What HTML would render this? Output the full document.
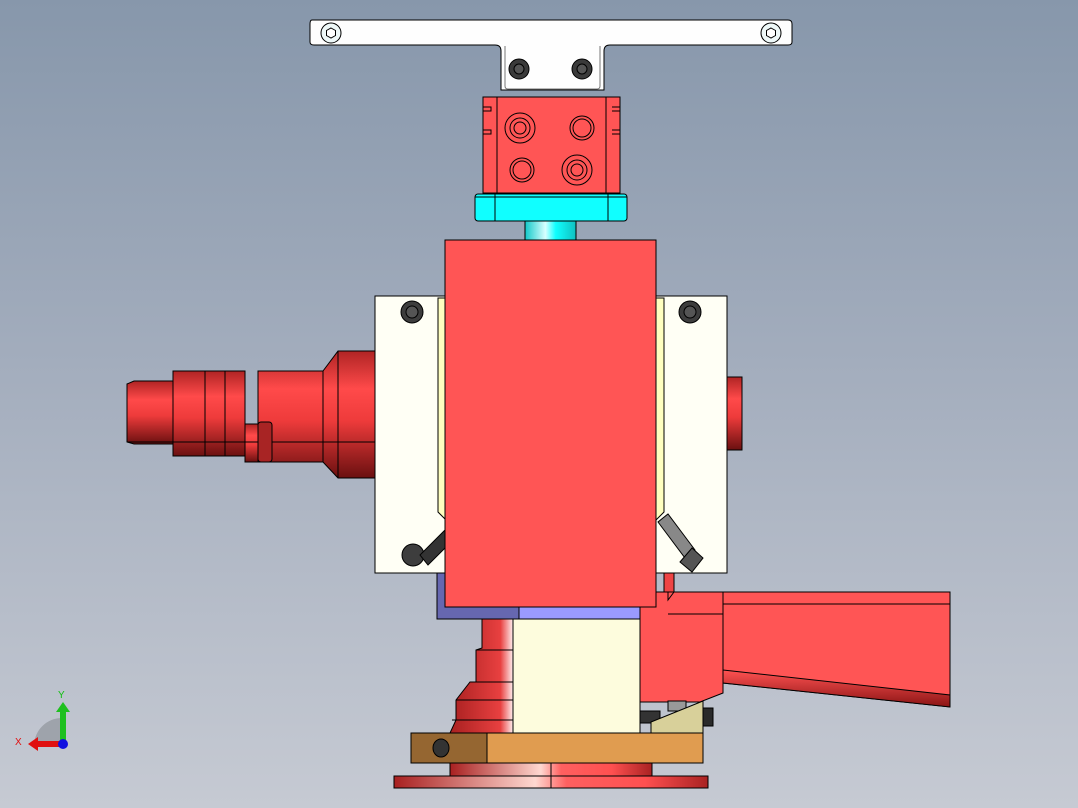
<!DOCTYPE html>
<html><head><meta charset="utf-8"><style>
html,body{margin:0;padding:0;width:1078px;height:808px;overflow:hidden}
body{background:linear-gradient(#8797ab,#a3adbd 45%,#c6cad3)}
svg{position:absolute;left:0;top:0}
</style></head><body>
<svg width="1078" height="808" viewBox="0 0 1078 808" xmlns="http://www.w3.org/2000/svg" font-family="Liberation Sans, sans-serif">
<defs>
<linearGradient id="cylV" x1="0" y1="0" x2="0" y2="1">
<stop offset="0" stop-color="#b02424"/><stop offset=".3" stop-color="#ff4a4a"/><stop offset=".55" stop-color="#ee3b3b"/><stop offset="1" stop-color="#6a1010"/></linearGradient>
<linearGradient id="cylH" x1="0" y1="0" x2="1" y2="0">
<stop offset="0" stop-color="#a82020"/><stop offset=".45" stop-color="#ffd8d0"/><stop offset=".55" stop-color="#ff6060"/><stop offset=".8" stop-color="#ff5050"/><stop offset="1" stop-color="#a82222"/></linearGradient>
<linearGradient id="cylH2" x1="0" y1="0" x2="1" y2="0">
<stop offset="0" stop-color="#a82020"/><stop offset=".8" stop-color="#e84040"/><stop offset="1" stop-color="#ffeeee"/></linearGradient>
<linearGradient id="cyan" x1="0" y1="0" x2="1" y2="0">
<stop offset="0" stop-color="#10c8c8"/><stop offset=".4" stop-color="#d8ffff"/><stop offset=".6" stop-color="#10ffff"/><stop offset="1" stop-color="#10c0c0"/></linearGradient>
<linearGradient id="hb" x1="0" y1="0" x2="0" y2="1"><stop offset="0" stop-color="#ff5252"/><stop offset="1" stop-color="#8a1414"/></linearGradient>
</defs>
<g stroke="#000" stroke-width="1">
<!-- top bar -->
<path d="M312 20 H788 Q792 20 792 24 V42 Q792 45 788 45 H610 Q604 45 604 51 V90 H501 V51 Q501 45 495 45 H314 Q310 45 310 42 V24 Q310 20 312 20Z" fill="#fefefe"/>
<path d="M505 46 V86 Q505 89 508 89 H597 Q600 89 600 86 V46" fill="none" stroke="#777"/>
<circle cx="331" cy="33" r="10" fill="#eef8f8"/><polygon points="331,28 335.5,30.5 335.5,35.5 331,38 326.5,35.5 326.5,30.5" fill="#fff"/>
<circle cx="771" cy="33" r="10" fill="#eef8f8"/><polygon points="771,28 775.5,30.5 775.5,35.5 771,38 766.5,35.5 766.5,30.5" fill="#fff"/>
<circle cx="519" cy="69" r="10" fill="#3a3a3a"/><circle cx="519" cy="69" r="5" fill="#555"/>
<circle cx="582" cy="69" r="10" fill="#3a3a3a"/><circle cx="582" cy="69" r="5" fill="#555"/>
<!-- red head block -->
<rect x="483" y="97" width="137" height="96" fill="#ff5555"/>
<rect x="497" y="97" width="109" height="96" fill="#ff5555"/>
<path d="M483 107 h8 v4 h-8 M483 130 h8 v4 h-8 M612 107 h8 v4 h-8 M612 130 h8 v4 h-8" fill="none"/>
<circle cx="520" cy="128" r="15" fill="none"/><circle cx="520" cy="128" r="10" fill="none"/><circle cx="520" cy="128" r="6" fill="none"/>
<circle cx="582" cy="128" r="12" fill="none"/><circle cx="582" cy="128" r="9" fill="none"/>
<circle cx="522" cy="170" r="12" fill="none"/><circle cx="522" cy="170" r="9" fill="none"/>
<circle cx="577" cy="170" r="15" fill="none"/><circle cx="577" cy="170" r="10" fill="none"/><circle cx="577" cy="170" r="6" fill="none"/>
<!-- cyan -->
<rect x="475" y="194" width="152" height="27" rx="3" fill="#10ffff"/>
<path d="M495 194 V221 M608 194 V221 M475 197 H627" fill="none"/>
<rect x="525" y="221" width="51" height="20" fill="url(#cyan)"/>
<!-- left cylinder -->
<path d="M127 384 L134 381 H173 V444 H134 L127 442Z" fill="url(#cylV)"/>
<rect x="173" y="371" width="72" height="85" fill="url(#cylV)"/>
<path d="M205 371 V456 M225 371 V456" fill="none"/>
<rect x="245" y="424" width="15" height="38" fill="url(#cylV)"/>
<path d="M258 371 H323 L338 351 H375 V478 H338 L323 462 H258Z" fill="url(#cylV)"/>
<path d="M323 371 V462 M338 351 V478 M127 442 H375" fill="none"/>
<rect x="258" y="422" width="14" height="40" rx="3" fill="#a82424"/>
<rect x="727" y="377" width="15" height="73" fill="url(#cylV)"/>
<!-- white plates -->
<rect x="375" y="296" width="70" height="277" fill="#fffff5"/>
<rect x="656" y="296" width="71" height="277" fill="#fffff5"/>
<path d="M438 298 V512 L446 520 V298Z" fill="#ffffc0"/>
<path d="M664 298 V512 L656 520 V298Z" fill="#ffffc0"/>
<circle cx="412" cy="312" r="11" fill="#3d3d3d"/><circle cx="412" cy="312" r="6" fill="#555"/>
<circle cx="690" cy="312" r="11" fill="#3d3d3d"/><circle cx="690" cy="312" r="6" fill="#555"/>
<circle cx="413" cy="555" r="11" fill="#3d3d3d"/>
<path d="M445 530 L430 545 L420 555 L428 565 L445 548Z" fill="#333"/>
<path d="M658 522 L685 558 L695 550 L668 514Z" fill="#888"/>
<path d="M680 562 L692 572 L703 558 L692 548Z" fill="#555"/>
<!-- blue plate -->
<rect x="437" y="573" width="82" height="46" fill="#6667b0"/>
<rect x="519" y="573" width="121" height="46" fill="#9a9aff"/>
<!-- big red block -->
<rect x="445" y="240" width="211" height="367" fill="#ff5555"/>
<!-- right body + handle -->
<rect x="664" y="573" width="10" height="22" fill="#ee4444"/>
<path d="M640 607 H656 V592 H723 V693 L700 702 H640Z" fill="#ff5555"/>
<path d="M668 592 V600 L674 592" fill="none"/>
<path d="M668 614 H723" fill="none"/>
<path d="M723 592 H950 V707 L723 683Z" fill="#ff5555"/>
<path d="M723 670 L950 695 V707 L723 683Z" fill="url(#hb)"/>
<path d="M723 604 H950" fill="none"/>
<!-- cream block -->
<rect x="513" y="619" width="127" height="114" fill="#fdfcdd"/>
<!-- left red stack -->
<path d="M482 619 H513 V733 H450 L456 720 V700 L470 682 H476 V650 L482 648Z" fill="url(#cylH2)"/>
<path d="M476 650 H513 M470 682 H513 M456 700 H513 M452 720 H513" fill="none"/>
<!-- tan wedge -->
<rect x="640" y="711" width="20" height="12" fill="#333"/>
<rect x="668" y="701" width="18" height="10" fill="#999"/>
<path d="M651 722 L703 701 V733 H651Z" fill="#d8d09a"/>
<rect x="703" y="708" width="10" height="18" fill="#2a2a2a"/>
<!-- orange base -->
<rect x="411" y="733" width="76" height="30" fill="#956631"/>
<rect x="487" y="733" width="216" height="30" fill="#e09c50"/>
<ellipse cx="441" cy="748" rx="8" ry="9" fill="#333"/>
<!-- discs -->
<rect x="450" y="763" width="202" height="13" fill="url(#cylH)"/>
<rect x="394" y="776" width="314" height="12" fill="url(#cylH)"/>
<path d="M551 763 V788" fill="none"/>
</g>
<!-- triad -->
<path d="M62 745 V718 A28 28 0 0 0 34 745Z" fill="#9ea3ab"/>
<rect x="60" y="708" width="6" height="37" fill="#1fc01f"/>
<polygon points="56,712 63,702 70,712" fill="#1fc01f"/>
<rect x="36" y="741" width="26" height="6" fill="#e01010"/>
<polygon points="38,737 28,744 38,751" fill="#e01010"/>
<circle cx="63" cy="744" r="5" fill="#1010e0"/>
<text x="58" y="698" font-size="10" fill="#10c010">Y</text>
<text x="15" y="745" font-size="10" fill="#e01010">X</text>
</svg>
</body></html>
